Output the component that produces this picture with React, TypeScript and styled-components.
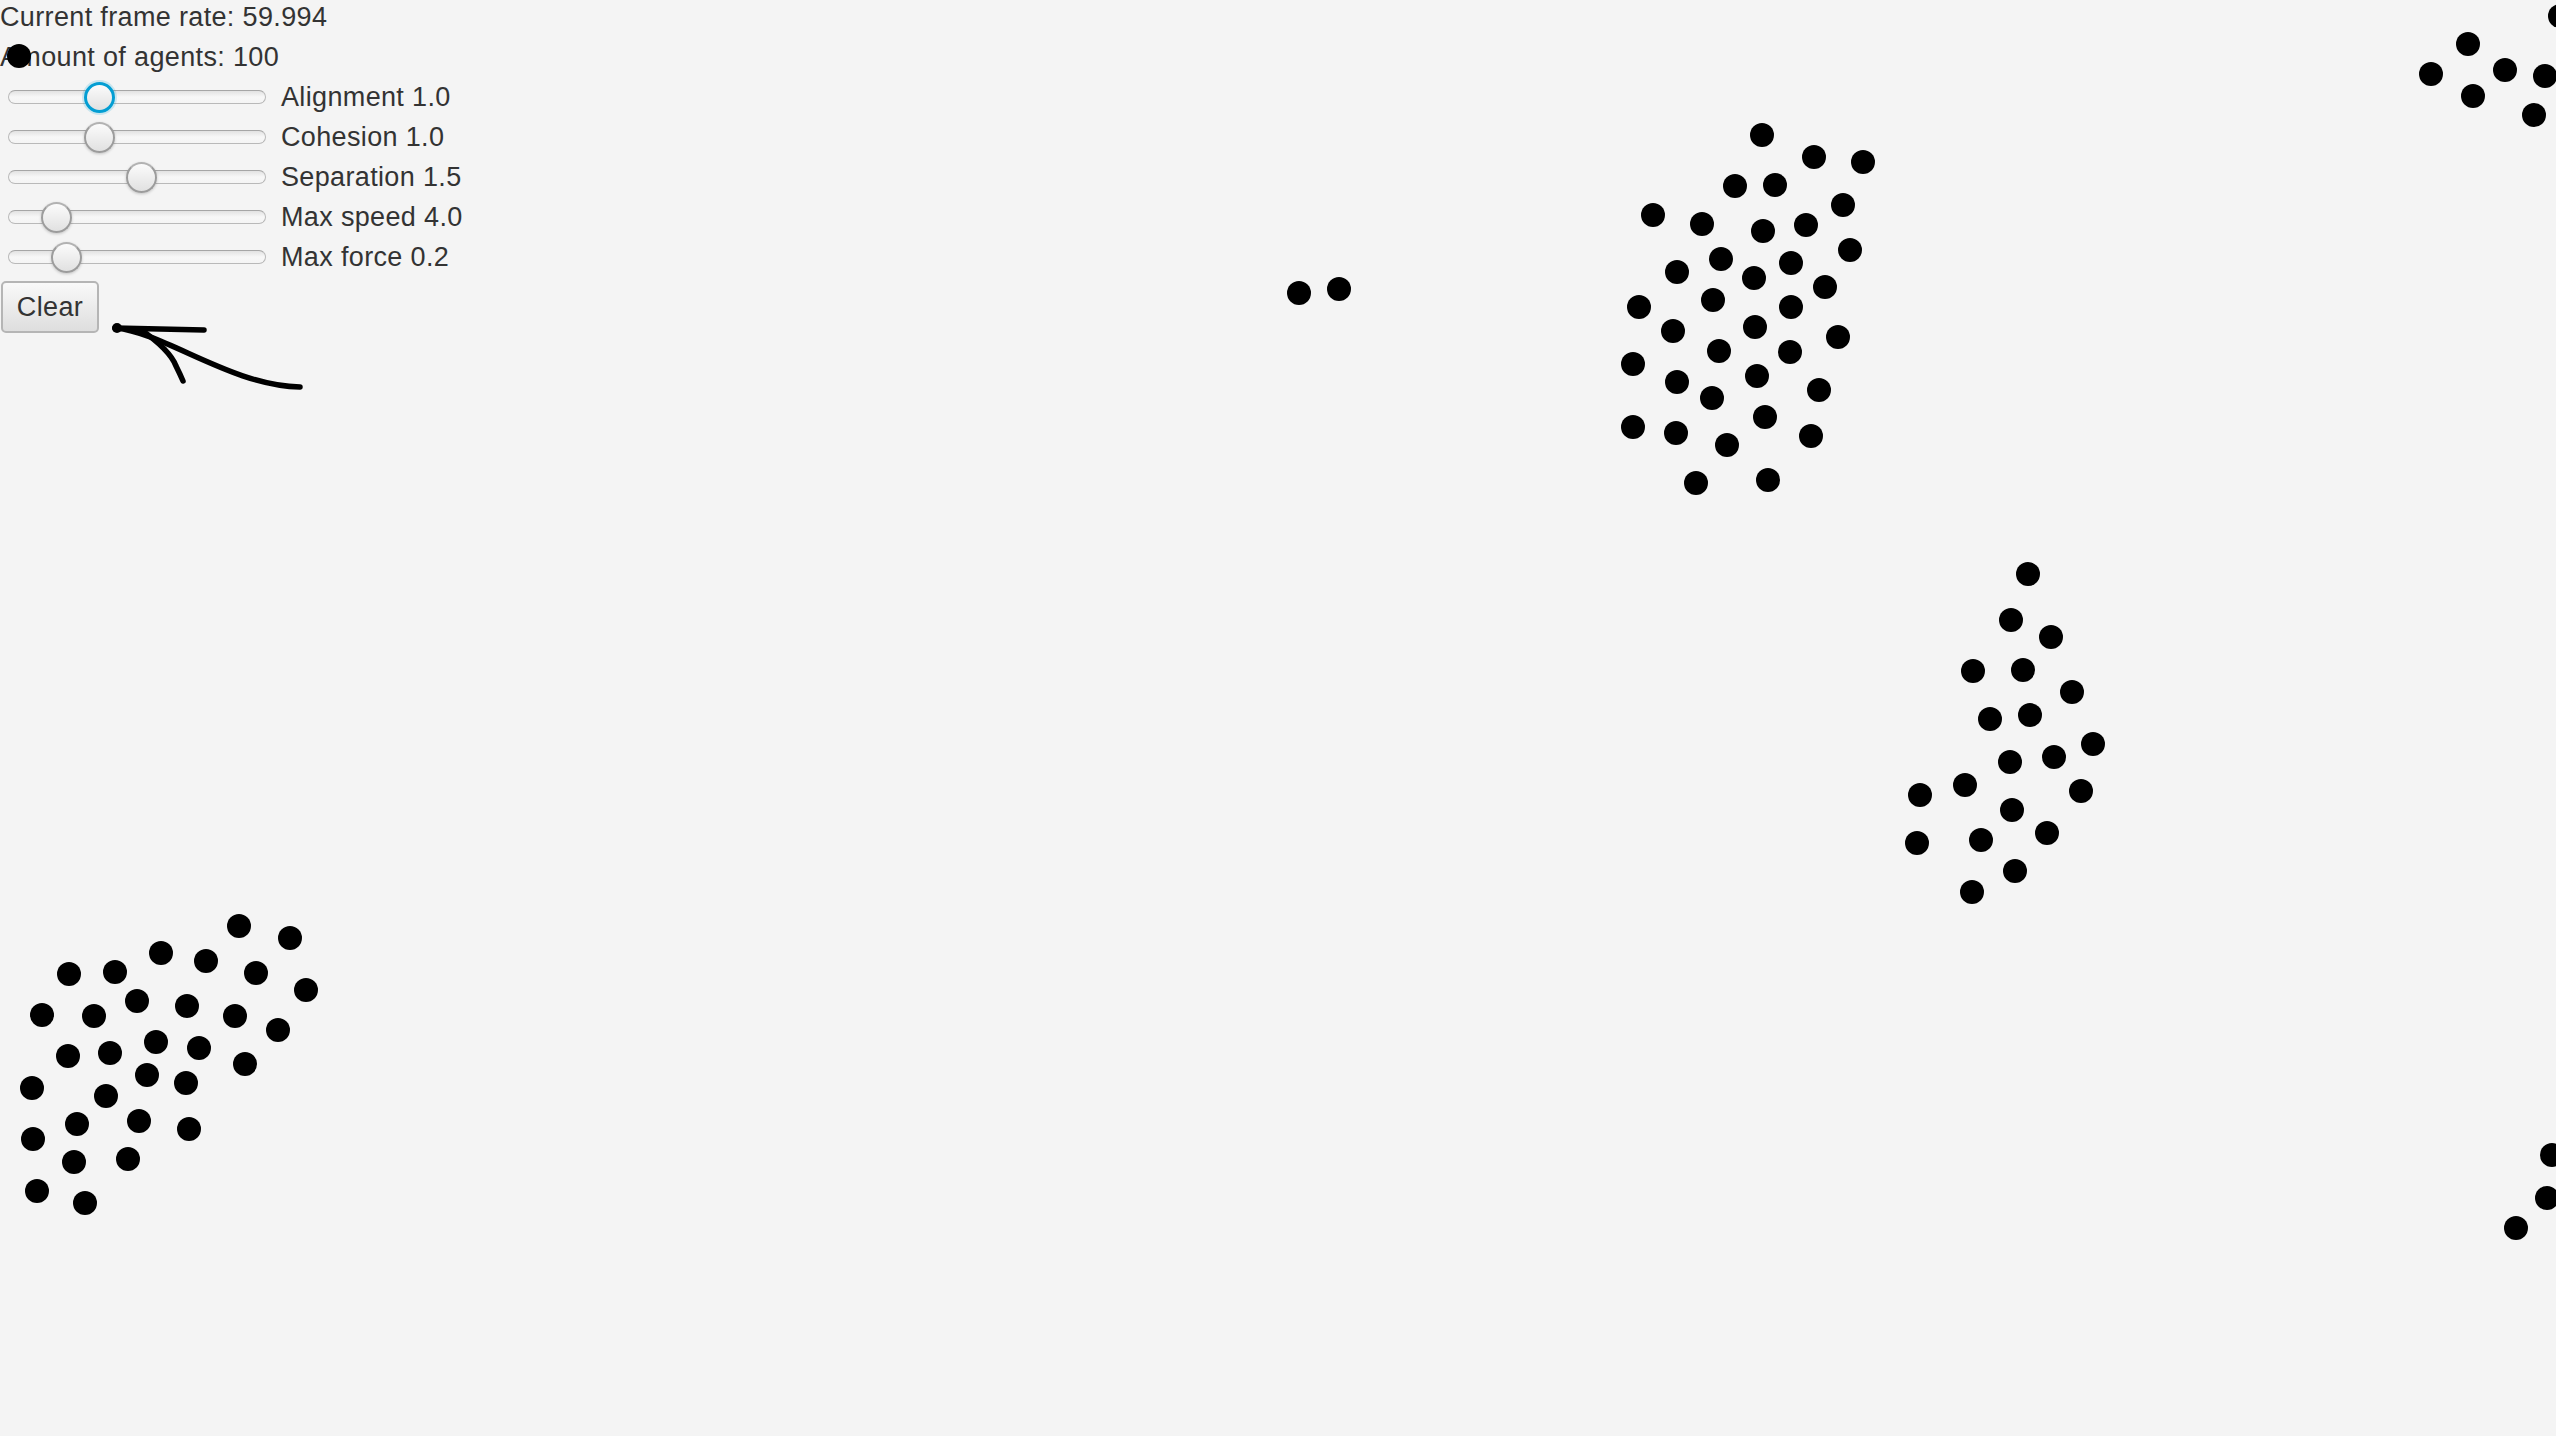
import React, { ReactElement } from "react";
import styled, { createGlobalStyle, css } from "styled-components";

const GlobalStyle = createGlobalStyle`
  html, body {
    margin: 0;
    padding: 0;
    background: #f4f4f4;
    overflow: hidden;
  }
`;

const Stage = styled.div`
  position: relative;
  width: 2556px;
  height: 1436px;
  background: #f4f4f4;
  font-family: "Liberation Sans", Arial, sans-serif;
  font-size: 27px;
  letter-spacing: 0.35px;
  color: #333333;
`;

const Controls = styled.div`
  display: flex;
  flex-direction: column;
  align-items: flex-start;
  gap: 6px;
`;

const InfoLine = styled.div`
  height: 34px;
  line-height: 34px;
  white-space: nowrap;
`;

const SliderRow = styled.div`
  display: flex;
  align-items: center;
  gap: 15px;
  height: 34px;
  padding-left: 8px;
`;

const Track = styled.div`
  position: relative;
  width: 258px;
  height: 14px;
  border-radius: 7px;
  box-sizing: border-box;
  border: 1.5px solid #b9b9b9;
  border-top-color: #a6a6a6;
  background: linear-gradient(#e2e2e2, #f7f7f7 50%, #f4f4f4);
`;

const focusedThumb = css`
  border: 3px solid #039ed3;
  box-shadow: 0 0 0 2px rgba(3, 158, 211, 0.18);
`;

const Thumb = styled.div<{ $focused: boolean }>`
  position: absolute;
  top: 50%;
  width: 31px;
  height: 31px;
  margin: -15.5px 0 0 -15.5px;
  box-sizing: border-box;
  border-radius: 50%;
  border: 2px solid #9c9c9c;
  border-top-color: #b2b2b2;
  background: linear-gradient(#fbfbfb, #e1e1e1);
  box-shadow: 0 1px 3px rgba(0, 0, 0, 0.2);
  ${props => props.$focused && focusedThumb}
`;

const SliderLabel = styled.span`
  white-space: nowrap;
  line-height: 34px;
`;

const ClearButton = styled.button`
  margin-top: 1px;
  margin-left: 1px;
  width: 98px;
  height: 52px;
  box-sizing: border-box;
  border: 2px solid #b5b5b5;
  border-radius: 5px;
  background: linear-gradient(#f9f9f9, #dedede);
  font: inherit;
  letter-spacing: inherit;
  color: #333333;
  padding: 0;
  cursor: pointer;
`;

const Canvas = styled.svg`
  position: absolute;
  inset: 0;
  pointer-events: none;
`;

type SliderSpec = {
  label: string;
  thumb: number;
  focused?: boolean;
};

const sliders: SliderSpec[] = [
  { label: "Alignment 1.0", thumb: 90, focused: true },
  { label: "Cohesion 1.0", thumb: 90 },
  { label: "Separation 1.5", thumb: 132 },
  { label: "Max speed 4.0", thumb: 47 },
  { label: "Max force 0.2", thumb: 57 },
];

// agent positions as they were when the frame was grabbed
const agents: [number, number][] = [
  // upper flock
  [1762, 135], [1814, 157], [1863, 162], [1735, 186], [1775, 185], [1843, 205],
  [1653, 215], [1702, 224], [1763, 231], [1806, 225], [1850, 250], [1721, 259],
  [1791, 263], [1677, 272], [1754, 278], [1825, 287], [1639, 307], [1713, 300],
  [1791, 307], [1673, 331], [1755, 327], [1838, 337], [1719, 351], [1790, 352],
  [1633, 364], [1677, 382], [1757, 376], [1712, 398], [1819, 390], [1765, 417],
  [1633, 427], [1676, 433], [1727, 445], [1811, 436], [1696, 483], [1768, 480],
  // lower left flock
  [239, 926], [290, 938], [161, 953], [206, 961], [69, 974], [115, 972],
  [256, 973], [306, 990], [42, 1015], [94, 1016], [137, 1001], [187, 1006],
  [235, 1016], [278, 1030], [68, 1056], [110, 1053], [156, 1042], [199, 1048],
  [245, 1064], [32, 1088], [106, 1096], [147, 1075], [186, 1083], [33, 1139],
  [77, 1124], [139, 1121], [189, 1129], [74, 1162], [128, 1159], [37, 1191],
  [85, 1203],
  // middle right flock
  [2028, 574], [2011, 620], [2051, 637], [1973, 671], [2023, 670], [2072, 692],
  [1990, 719], [2030, 715], [2093, 744], [2054, 757], [2010, 762], [1965, 785],
  [1920, 795], [2081, 791], [2012, 810], [2047, 833], [1981, 840], [1917, 843],
  [2015, 871], [1972, 892],
  // top right corner
  [2468, 44], [2431, 74], [2505, 70], [2473, 96], [2545, 76], [2534, 115], [2560, 16],
  // bottom right edge
  [2552, 1155], [2547, 1198], [2516, 1228],
  // pair
  [1299, 293], [1339, 289],
  // stray one over the label
  [19, 56],
];

export default function App(): ReactElement {
  return (
    <>
      <GlobalStyle />
      <Stage>
        <Controls>
          <InfoLine>Current frame rate: 59.994</InfoLine>
          <InfoLine>Amount of agents: 100</InfoLine>
          {sliders.map(s => (
            <SliderRow key={s.label}>
              <Track>
                <Thumb $focused={!!s.focused} style={{ left: s.thumb }} />
              </Track>
              <SliderLabel>{s.label}</SliderLabel>
            </SliderRow>
          ))}
          <ClearButton>Clear</ClearButton>
        </Controls>
        <Canvas width={2556} height={1436} viewBox="0 0 2556 1436">
          {agents.map(([x, y], i) => (
            <circle key={i} cx={x} cy={y} r={12} fill="#000" />
          ))}
          <g fill="none" stroke="#000" strokeWidth={5.5} strokeLinecap="round" strokeLinejoin="round">
            <path d="M115 328 L204 330" />
            <path d="M116 328 C165 333 232 386 300 387" />
            <path d="M140 329 Q170 350 176 366 Q180 374 183 381" />
          </g>
          <circle cx={117} cy={328} r={5} fill="#000" />
        </Canvas>
      </Stage>
    </>
  );
}
